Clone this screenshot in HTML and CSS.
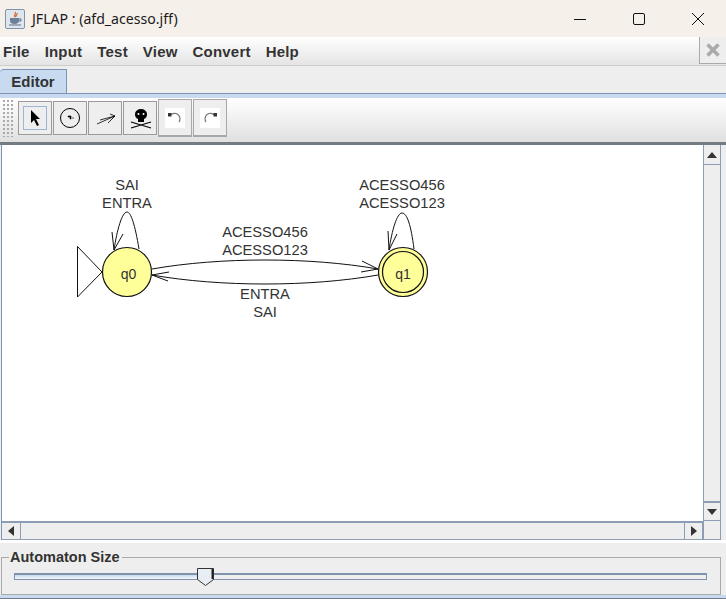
FILE: index.html
```html
<!DOCTYPE html>
<html>
<head>
    <title>JFLAP : (afd_acesso.jff)</title>
    <link rel="stylesheet" href="styles.css">
</head>
<body>
    <div class="window">
        <div class="titlebar">
            <div class="app-icon">
                <svg width="18" height="18" viewBox="0 0 18 18">
                    <path d="M9 2c2 2-2 3 0 5M11 3c1 2-2 2-1 4" fill="none" stroke="#d9642a" stroke-width="1.2"/>
                    <path d="M4 8h9v3c0 2-2 3-4.500 3S4 13 4 11z" fill="#6d7f99"/>
                    <path d="M13 9h2v2h-2M3 15h12" fill="none" stroke="#5a6c88"/>
                </svg>
            </div>
            <span class="title">JFLAP : (afd_acesso.jff)</span>
            <div class="win-buttons">
                <svg width="14" height="14" viewBox="0 0 14 14"><path d="M1 7.500h12" stroke="#111" fill="none"/></svg>
                <svg width="14" height="14" viewBox="0 0 14 14"><rect x="1.500" y="1.500" width="11" height="11" rx="1.500" stroke="#111" fill="none"/></svg>
                <svg width="14" height="14" viewBox="0 0 14 14"><path d="M1 1l12 12M13 1L1 13" stroke="#111" fill="none"/></svg>
            </div>
        </div>

        <div class="menubar">
            <span>File</span>
            <span>Input</span>
            <span>Test</span>
            <span>View</span>
            <span>Convert</span>
            <span>Help</span>
            <div class="close-tab">
                <svg width="16" height="16" viewBox="0 0 16 16"><path d="M2.500 2.500l11 11M13.500 2.500l-11 11" stroke="#aaa" stroke-width="3.500" fill="none"/></svg>
            </div>
        </div>

        <div class="tabs">
            <div class="tab">Editor</div>
        </div>

        <div class="toolbar">
            <div class="grip"></div>
            <div class="tool tool-active">
                <svg width="22" height="22" viewBox="0 0 22 22"><path d="M7 3v13l3-3 3 6 2-1-3-6h4z" fill="#000"/></svg>
            </div>
            <div class="tool">
                <svg width="22" height="22" viewBox="0 0 22 22">
                    <circle cx="11" cy="11" r="9.500" fill="none" stroke="#000"/>
                    <path d="M9 9h3v3h-1v-2H9zM13 11h2" fill="#000" stroke="#000" stroke-width=".6"/>
                </svg>
            </div>
            <div class="tool">
                <svg width="22" height="22" viewBox="0 0 22 22"><path d="M3 17l18-8M6 13l15-4M16 7l5 2-7 7" fill="none" stroke="#000" stroke-width=".8"/></svg>
            </div>
            <div class="tool">
                <svg width="24" height="24" viewBox="0 0 24 24">
                    <path d="M7 8a6 5 0 0 1 12 0c0 3-1 4-3 5v3h-6v-3C8 12 7 11 7 8z" fill="#000"/>
                    <circle cx="10.500" cy="8" r="1" fill="#fff"/>
                    <circle cx="15.500" cy="8" r="1" fill="#fff"/>
                    <path d="M3 16l20 6M23 16L3 22" fill="none" stroke="#000" stroke-width="1.200"/>
                </svg>
            </div>
            <div class="tool tool-raised">
                <div class="tool-page">
                    <svg width="16" height="20" viewBox="0 0 16 20">
                        <path d="M3 7c4-3 9-2 10 3 0 2 0 3-1 4" fill="none" stroke="#777" stroke-width="1.200"/>
                        <rect x="1" y="5" width="3.500" height="3.500" fill="#333"/>
                    </svg>
                </div>
            </div>
            <div class="tool tool-raised">
                <div class="tool-page">
                    <svg width="16" height="20" viewBox="0 0 16 20">
                        <path d="M13 7C9 4 4 5 3 10c0 2 0 3 1 4" fill="none" stroke="#777" stroke-width="1.200"/>
                        <rect x="11.500" y="5" width="3.500" height="3.500" fill="#333"/>
                    </svg>
                </div>
            </div>
        </div>

        <div class="scrollpane">
            <div class="canvas">
                <svg class="diagram" width="700" height="376" viewBox="2 145 700 376">
                    <g class="edges">
                        <path d="M77.500 246.500V297L102 272z"/>
                        <path d="M139 249C135 225 131 212 127 212 122 212 117 230 114 250"/>
                        <path d="M114 250L112 232M114 250L123 234"/>
                        <path d="M414 249C411 225 407 213 402 213 397 213 392 230 389 250"/>
                        <path d="M389 250L388 231M389 250L397 234"/>
                        <path d="M152 269C220 257 310 257 378 269"/>
                        <path d="M378 269L362 261M378 269L361 272"/>
                        <path d="M378 275C310 287 220 287 152 275"/>
                        <path d="M152 275L168 281M152 275L169 272"/>
                    </g>
                    <circle class="state" cx="127" cy="272" r="24.500"/>
                    <circle class="state" cx="403" cy="272" r="24.500"/>
                    <circle class="state" cx="403" cy="272" r="20.500"/>
                    <text class="state-name" x="128.500" y="279">q0</text>
                    <text class="state-name" x="403" y="279">q1</text>
                    <text class="edge-label" x="127" y="190">SAI</text>
                    <text class="edge-label" x="127" y="208">ENTRA</text>
                    <text class="edge-label" x="402" y="190">ACESSO456</text>
                    <text class="edge-label" x="402" y="208">ACESSO123</text>
                    <text class="edge-label" x="265" y="237">ACESSO456</text>
                    <text class="edge-label" x="265" y="255">ACESSO123</text>
                    <text class="edge-label" x="265" y="299">ENTRA</text>
                    <text class="edge-label" x="265" y="317">SAI</text>
                </svg>
            </div>
            <div class="vbar">
                <div class="arrow-btn"><div class="tri tri-up"></div></div>
                <div class="track"></div>
                <div class="arrow-btn"><div class="tri tri-down"></div></div>
            </div>
            <div class="hbar">
                <div class="arrow-btn"><div class="tri tri-left"></div></div>
                <div class="track"></div>
                <div class="arrow-btn"><div class="tri tri-right"></div></div>
            </div>
            <div class="corner"></div>
        </div>

        <div class="size-panel">
            <fieldset class="size-box">
                <legend>Automaton Size</legend>
                <div class="slider">
                    <div class="slider-fill"></div>
                    <svg class="thumb" width="20" height="20" viewBox="0 0 20 20">
                        <path d="M1.500 1.500h16v11l-8 6-8-6z" fill="#e9eef5" stroke="#333"/>
                        <path d="M16.500 2v10" stroke="#222" stroke-width="2"/>
                    </svg>
                </div>
            </fieldset>
        </div>
        <div class="bottom-edge"></div>
    </div>
</body>
</html>
```

FILE: styles.css
```css
html, body {
    margin: 0;
    padding: 0;
}
body {
    background-color: #eeeeee;
    font-family: "Liberation Sans", sans-serif;
    color: #333333;
}
.window {
    width: 726px;
    height: 599px;
    display: flex;
    flex-direction: column;
    overflow: hidden;
}

/* title bar */
.titlebar {
    height: 37px;
    flex: none;
    display: flex;
    align-items: center;
    background-color: #f6f0eb;
    padding-left: 5px;
    box-sizing: border-box;
}
.app-icon {
    width: 18px;
    height: 18px;
    border: 1px solid #7f93ad;
    border-radius: 2px;
    background-color: #dfe6ee;
    display: flex;
}
.title {
    margin-left: 7px;
    font-family: "Noto Sans", sans-serif;
    font-size: 14.100px;
    color: #1a1a1a;
}
.win-buttons {
    margin-left: auto;
    display: flex;
    gap: 45px;
    padding-right: 21px;
}

/* menu */
.menubar {
    height: 28px;
    flex: none;
    display: flex;
    align-items: center;
    gap: 15px;
    padding-left: 3px;
    box-sizing: border-box;
    position: relative;
    background: linear-gradient(#ffffff, #e4e4e4);
    font-size: 15px;
    font-weight: bold;
    letter-spacing: .2px;
}
.close-tab {
    position: absolute;
    right: 0;
    top: 0;
    width: 27px;
    height: 27px;
    border-left: 1px solid #aaaaaa;
    border-bottom: 1px solid #aaaaaa;
    box-sizing: border-box;
    display: flex;
    align-items: center;
    justify-content: center;
    background-color: #eeeeee;
}

/* tabs */
.tabs {
    height: 29px;
    flex: none;
    box-sizing: border-box;
    border-top: 1px solid #cccccc;
    border-bottom: 1px solid #7b93b5;
    padding-top: 3px;
    background-color: #eeeeee;
}
.tab {
    width: 67px;
    height: 24px;
    box-sizing: border-box;
    background-color: #c8daf0;
    border: 1px solid #7b93b5;
    border-left: none;
    border-bottom: none;
    border-top-left-radius: 4px;
    text-align: center;
    font-size: 15px;
    font-weight: bold;
    line-height: 23px;
}

/* toolbar */
.toolbar {
    height: 51px;
    flex: none;
    box-sizing: border-box;
    display: flex;
    align-items: center;
    padding-left: 2px;
    padding-right: 1px;
    padding-bottom: 4px;
    background: linear-gradient(#ffffff, #e0e0e0);
    border-top: 4px solid #c8daf0;
    border-bottom: 3px solid #737b83;
}
.grip {
    width: 11px;
    height: 38px;
    margin-right: 5px;
    background-image: radial-gradient(#aaaaaa 1px, transparent 1px);
    background-size: 4px 4px;
}
.tool {
    width: 34px;
    height: 34px;
    margin-right: 1px;
    box-sizing: border-box;
    border: 1px solid #9a9a9a;
    background-color: #eeeeee;
    display: flex;
    align-items: center;
    justify-content: center;
}
.tool-active svg {
    border: 1px solid #9db5d2;
}
.tool-raised {
    height: 38px;
    border-width: 1px 1px 2px;
    border-color: #a8a8a8;
}
.tool-page {
    background-color: #ffffff;
    padding: 0 2px;
    display: flex;
}

/* drawing area and scrollbars */
.scrollpane {
    height: 395px;
    flex: none;
    margin-left: 1px;
    width: 719px;
    display: grid;
    grid-template-columns: 701px 18px;
    grid-template-rows: 376px 19px;
    border-left: 1px solid #7b93b5;
    box-sizing: border-box;
}
.canvas {
    background-color: #ffffff;
    overflow: hidden;
}
.diagram {
    display: block;
}
.edges path {
    fill: none;
    stroke: #111111;
    stroke-width: 1;
}
.state {
    fill: #ffff99;
    stroke: #111111;
    stroke-width: 1.200;
}
.state-name, .edge-label {
    font-family: "Liberation Sans", sans-serif;
    font-size: 14px;
    fill: #333333;
    text-anchor: middle;
}
.edge-label {
    font-size: 14.700px;
}
.vbar {
    display: flex;
    flex-direction: column;
    box-sizing: border-box;
    border: 1px solid #8d9db3;
    border-top: none;
    border-bottom: none;
    background-color: #eeeeee;
}
.hbar {
    display: flex;
    box-sizing: border-box;
    border-top: 2px solid #8d9db3;
    border-bottom: 1px solid #8d9db3;
    background-color: #eeeeee;
}
.track {
    flex: 1;
}
.vbar .arrow-btn {
    height: 20px;
    border-bottom: 1px solid #8d9db3;
}
.vbar .arrow-btn:last-child {
    border-top: 2px solid #8d9db3;
}
.hbar .arrow-btn {
    width: 19px;
    border-right: 1px solid #8d9db3;
}
.hbar .arrow-btn:last-child {
    border-left: 1px solid #8d9db3;
}
.arrow-btn {
    box-sizing: border-box;
    display: flex;
    align-items: center;
    justify-content: center;
}
.tri {
    width: 0;
    height: 0;
    border-style: solid;
    border-color: transparent;
}
.tri-up {
    border-width: 0 5px 6px;
    border-bottom-color: #333333;
}
.tri-down {
    border-width: 6px 5px 0;
    border-top-color: #333333;
}
.tri-left {
    border-width: 5px 6px 5px 0;
    border-right-color: #333333;
}
.tri-right {
    border-width: 5px 0 5px 6px;
    border-left-color: #333333;
}
.corner {
    box-sizing: border-box;
    border: 1px solid #8d9db3;
    border-top: none;
    background-color: #eeeeee;
}

/* size slider */
.size-panel {
    height: 55px;
    flex: none;
    box-sizing: border-box;
    border-top: 3px solid #ffffff;
    padding: 5px 5px 0 1px;
}
.size-box {
    margin: 0;
    padding: 0 13px 0 12px;
    height: 47px;
    box-sizing: border-box;
    border: 1px solid #aaaaaa;
    border-radius: 0;
}
.size-box legend {
    padding: 0 2px 0 1px;
    margin-left: -5px;
    font-size: 14.500px;
    font-weight: bold;
    line-height: 18px;
}
.slider {
    position: relative;
    margin-top: 7px;
    height: 7px;
    box-sizing: border-box;
    border: 1px solid #8093ad;
    border-width: 2px 1px 1px;
    background-color: #eeeeee;
}
.slider-fill {
    width: 183px;
    height: 100%;
    background: linear-gradient(#c8daf0, #f2f6fb);
}
.thumb {
    position: absolute;
    left: 181px;
    top: -8px;
}
.bottom-edge {
    flex: 1;
    background-color: #c8daf0;
    border-bottom: 1px solid #737b83;
}
```
